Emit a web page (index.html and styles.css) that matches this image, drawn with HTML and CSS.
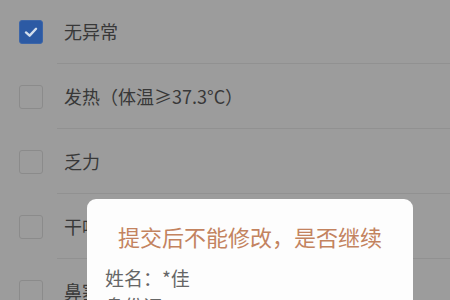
FILE: index.html
```
<!DOCTYPE html>
<html lang="zh">
<head>
<meta charset="utf-8">
<link rel="stylesheet" href="styles.css">
</head>
<body>
<div class="page">
  <ul class="list">
    <li class="row">
      <span class="box checked">
        <svg viewBox="0 0 24 24" width="24" height="24"><path d="M6.5 12.5 L10.5 16 L17.5 8.5" fill="none" stroke="#d3deec" stroke-width="2.6" stroke-linecap="round" stroke-linejoin="round"/></svg>
      </span>
      <span class="label">无异常</span>
    </li>
    <li class="row"><span class="box"></span><span class="label">发热（体温≥37.3°C）</span></li>
    <li class="row"><span class="box"></span><span class="label">乏力</span></li>
    <li class="row"><span class="box"></span><span class="label">干咳</span></li>
    <li class="row"><span class="box"></span><span class="label">鼻塞</span></li>
  </ul>
  <div class="dialog">
    <div class="title">提交后不能修改，是否继续</div>
    <div class="line">姓名：*佳</div>
    <div class="line">身份证：<span class="num">3****************5</span></div>
  </div>
</div>
</body>
</html>
```
FILE: styles.css
```
html, body {
  margin: 0;
  padding: 0;
}
body {
  background: #9c9c9c;
  font-family: "Noto Sans CJK SC", "Noto Sans", sans-serif;
  width: 450px;
  height: 300px;
  overflow: hidden;
}
.page {
  position: relative;
  width: 450px;
  height: 300px;
  overflow: hidden;
}
.list {
  list-style: none;
  margin: -1px 0 0 0;
  padding: 0;
}
.row {
  display: flex;
  align-items: stretch;
  height: 65px;
}
.box {
  flex: none;
  align-self: center;
  width: 24px;
  height: 24px;
  box-sizing: border-box;
  margin-left: 19px;
  margin-right: 14px;
  border: 1.5px solid #8b8b8b;
  border-radius: 3px;
  display: flex;
  align-items: center;
  justify-content: center;
}
.box.checked {
  background: #2c5aa4;
  border-color: #3d66a8;
}
.box svg {
  display: block;
}
.label {
  flex: 1;
  display: flex;
  align-items: center;
  padding-left: 7px;
  font-size: 18px;
  color: #383838;
  border-bottom: 1px solid #919191;
}
.dialog {
  position: absolute;
  left: 87px;
  top: 199px;
  width: 326px;
  height: 140px;
  background: #fdfdfd;
  border-radius: 9px;
  box-sizing: border-box;
  padding: 22px 18px 0 18px;
}
.title {
  text-align: center;
  font-size: 22px;
  line-height: 30px;
  color: #c3835f;
}
.line {
  font-size: 19px;
  line-height: 28px;
  color: #666;
}
.title + .line {
  margin-top: 13px;
}
.num {
  font-family: "Noto Sans", sans-serif;
  font-size: 13px;
  color: #777;
}
```
